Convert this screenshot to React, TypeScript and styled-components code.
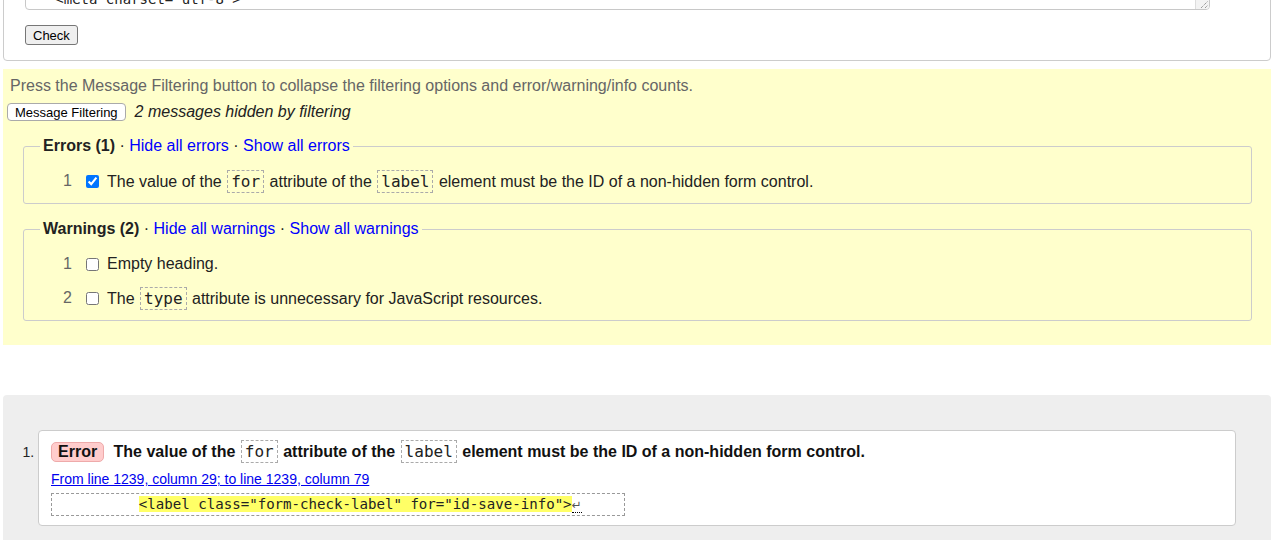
import React from "react";
import styled, { createGlobalStyle } from "styled-components";

const GlobalStyle = createGlobalStyle`
  html, body {
    overflow: hidden;
  }
  body {
    margin: 0;
    padding: 0 10px 0 3px;
    background: #fff;
    color: #222;
    font-family: "Liberation Sans", Arial, Helvetica, sans-serif;
    font-size: 16px;
  }
`;

const mono = `"DejaVu Sans Mono", "Liberation Mono", monospace`;

// top: the source form, scrolled so only its lower edge shows
const FormPanel = styled.form`
  margin: -72px 0 0;
  border: 1px solid #ccc;
  border-radius: 4px;
  padding: 20px 60px 15px 21px;
`;

const SourceBox = styled.div`
  position: relative;
  box-sizing: border-box;
  height: 61px;
  border: 1px solid #c8c8c8;
  border-radius: 4px;
  overflow: hidden;
  display: flex;
  flex-direction: column;
  justify-content: flex-end;
  padding: 0 4px 1px;
  font-family: ${mono};
  font-size: 14px;
  line-height: 17px;
  white-space: pre;
  color: #222;
`;

const Grip = styled.span`
  position: absolute;
  right: 0;
  bottom: 0;
  width: 13px;
  height: 12px;
  background: #f3f3f3;
  border-left: 1px solid #ddd;
  border-top: 1px solid #ddd;
  display: flex;
  align-items: flex-end;
  justify-content: flex-end;
`;

const CheckButton = styled.button`
  display: block;
  margin-top: 15px;
  height: 20px;
  padding: 0 7px;
  font-family: inherit;
  font-size: 13px;
  color: #000;
  background: #efefef;
  border: 1px solid #767676;
  border-radius: 3px;
`;

// yellow filter panel
const FilterPanel = styled.section`
  margin-top: 8px;
  background: #ffffcc;
  padding: 7px 0 24px;
`;

const Hint = styled.p`
  margin: 0 0 0 7px;
  line-height: 20px;
  color: #666;
`;

const FilterRow = styled.div`
  margin-top: 5px;
  height: 22px;
  display: flex;
  align-items: center;
  padding-left: 4px;
`;

const FilterButton = styled.button`
  height: 18px;
  padding: 0 7px;
  font-family: inherit;
  font-size: 13px;
  color: #000;
  background: #fff;
  border: 1px solid #aaa;
  border-radius: 4px;
`;

const HiddenNote = styled.em`
  margin-left: 9px;
  color: #222;
`;

const Group = styled.fieldset`
  margin: 13px 19px 0 20px;
  padding: 8px 12px 5px 16px;
  border: 1px solid #ccc;
  border-radius: 3px;
  min-width: 0;
  & + & {
    margin-top: 15px;
  }
`;

const Legend = styled.legend`
  padding: 0 3px;
  line-height: 20px;
  color: #222;
  a {
    color: #00f;
    text-decoration: none;
  }
`;

const Row = styled.div`
  display: flex;
  align-items: center;
  height: 34px;
`;

const RowNum = styled.span`
  width: 32px;
  text-align: right;
  color: #666;
  margin-right: 14px;
`;

const Tick = styled.input`
  margin: 0 8px 0 0;
  width: 13px;
  height: 13px;
`;

const Code = styled.code`
  display: inline-block;
  margin: 0 1px;
  padding: 1px 3px;
  border: 1px dashed #aaa;
  font-family: ${mono};
  font-size: 16px;
  font-weight: normal;
  line-height: 19px;
  color: #222;
  vertical-align: baseline;
`;

// results list
const Results = styled.section`
  margin-top: 50px;
  background: #eee;
  border-radius: 4px;
  padding: 35px 35px 30px 0;
`;

const ResultList = styled.ol`
  margin: 0;
  padding-left: 35px;
`;

const ResultItem = styled.li`
  background: #fff;
  border: 1px solid #ccc;
  border-radius: 4px;
  padding: 9px 12px 9px 12px;
  &::marker {
    font-size: 14px;
    color: #222;
  }
`;

const MessageLine = styled.p`
  margin: 0;
  line-height: 24px;
  font-weight: bold;
  color: #111;
`;

const Badge = styled.strong`
  display: inline-block;
  padding: 0 6px;
  margin-right: 5px;
  line-height: 18px;
  background: #fcc;
  border: 1px solid #eaa;
  border-radius: 5px;
`;

const Location = styled.p`
  margin: 7px 0 0;
  font-size: 14px;
  line-height: 17px;
  a {
    color: #00e;
  }
`;

const Extract = styled.code`
  display: block;
  box-sizing: border-box;
  margin-top: 5px;
  width: 574px;
  padding-left: 2px;
  border: 1px dashed #999;
  font-family: ${mono};
  font-size: 14.1px;
  line-height: 20px;
  white-space: pre;
  color: #222;
  mark {
    background: #ff6;
    color: #222;
  }
`;

const LineEnd = styled.span`
  font-family: "DejaVu Sans", sans-serif;
  font-size: 12px;
  color: #555;
  border-bottom: 1px dotted #000;
`;

const ResizeGlyph = () => (
  <svg width="9" height="9" viewBox="0 0 9 9">
    <path d="M1 8 L8 1 M5 8 L8 5" stroke="#777" strokeWidth="1" strokeDasharray="1 1" />
  </svg>
);

const App = () => {
  return (
    <>
      <GlobalStyle />
      <FormPanel onSubmit={(e) => e.preventDefault()}>
        <SourceBox>
          <div>{"<!DOCTYPE html>"}</div>
          <div>{'<html lang="en">'}</div>
          <div>{"   <head>"}</div>
          <div>{'   <meta charset="utf-8">'}</div>
          <Grip>
            <ResizeGlyph />
          </Grip>
        </SourceBox>
        <CheckButton type="submit">Check</CheckButton>
      </FormPanel>

      <FilterPanel>
        <Hint>
          Press the Message Filtering button to collapse the filtering options
          and error/warning/info counts.
        </Hint>
        <FilterRow>
          <FilterButton>Message Filtering</FilterButton>
          <HiddenNote>2 messages hidden by filtering</HiddenNote>
        </FilterRow>

        <Group>
          <Legend>
            <strong>Errors (1)</strong> · <a href="#">Hide all errors</a> ·{" "}
            <a href="#">Show all errors</a>
          </Legend>
          <Row>
            <RowNum>1</RowNum>
            <Tick type="checkbox" defaultChecked />
            <span>
              The value of the <Code>for</Code> attribute of the{" "}
              <Code>label</Code> element must be the ID of a non-hidden form
              control.
            </span>
          </Row>
        </Group>

        <Group>
          <Legend>
            <strong>Warnings (2)</strong> · <a href="#">Hide all warnings</a> ·{" "}
            <a href="#">Show all warnings</a>
          </Legend>
          <Row>
            <RowNum>1</RowNum>
            <Tick type="checkbox" />
            <span>Empty heading.</span>
          </Row>
          <Row>
            <RowNum>2</RowNum>
            <Tick type="checkbox" />
            <span>
              The <Code>type</Code> attribute is unnecessary for JavaScript
              resources.
            </span>
          </Row>
        </Group>
      </FilterPanel>

      <Results>
        <ResultList>
          <ResultItem>
            <MessageLine>
              <Badge>Error</Badge> The value of the <Code>for</Code> attribute
              of the <Code>label</Code> element must be the ID of a non-hidden
              form control.
            </MessageLine>
            <Location>
              <a href="#">From line 1239, column 29; to line 1239, column 79</a>
            </Location>
            <Extract>
              {"          "}
              <mark>{'<label class="form-check-label" for="id-save-info">'}</mark>
              <LineEnd>↵</LineEnd>
            </Extract>
          </ResultItem>
        </ResultList>
      </Results>
    </>
  );
};

export default App;
